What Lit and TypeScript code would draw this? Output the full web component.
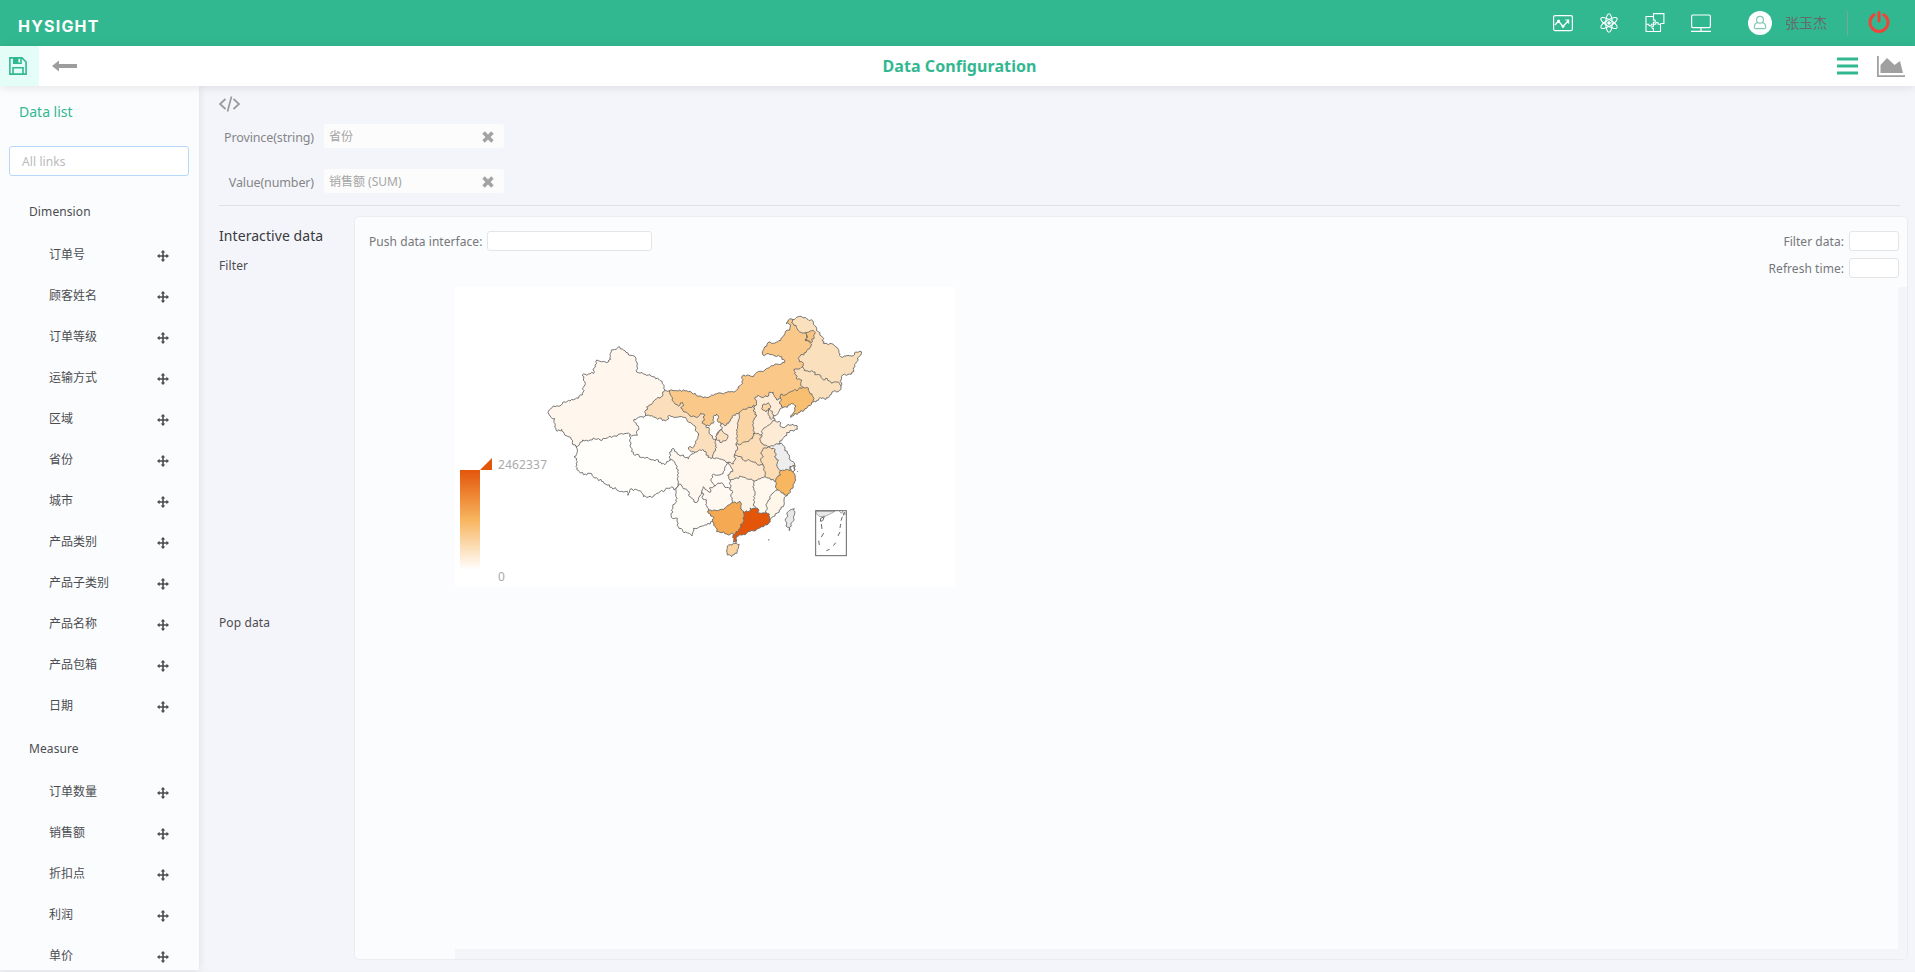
import { LitElement, html, css, svg } from "lit";
import { customElement, state } from "lit/decorators.js";

type Pt = [number, number];

/* Border lines of the map; each one is shared by the regions on both sides. */
const LINES: Record<string, string> = {
  xjOut: "375,270 372,262 367,250 357,238 330,224 310,222 290,216 292,192 288,175 272,166 258,157 250,150 240,142 236,140 228,148 214,150 210,165 212,178 205,186 190,184 170,180 165,195 161,220 145,222 126,226 136,250 130,262 127,285 110,294 90,303 72,305 60,318 40,318 28,330 27,343 34,353 44,356 42,368 48,385 52,394 65,388 74,405 92,412 97,428 108,440",
  xjTib: "108,440 118,435 128,420 150,420 160,414 180,420 205,412 225,408 240,402 260,400 270,403",
  xjQh: "270,403 275,408 292,406 290,395 297,388 290,375 282,358 316,347",
  xjGs: "316,347 318,330 328,315 338,308 350,296 364,290 375,270",
  tibOut: "108,440 112,455 102,470 112,485 108,500 118,515 140,525 150,520 160,530 190,545 215,562 245,574 262,574 264,586 270,568 295,572 305,578 310,590 335,592 350,580 375,570 385,565 395,560 402,570 411,562",
  tibQh: "270,403 270,425 275,445 280,462 310,472 330,478 355,480 365,492 375,494 380,485 390,480",
  tibSc: "390,480 400,482 408,495 413,515 412,535 414,552 411,562",
  qhSc: "390,480 390,462 395,448 403,448 412,462 420,468 430,465 445,477 455,462 465,457",
  qhGs: "316,347 330,348 345,352 372,360 380,360 388,345 405,352 425,350 440,358 452,368 465,378 470,395 476,405 470,420 468,430 462,440 445,443 450,452 465,457",
  gsTop: "375,270 388,272",
  gsNm: "388,272 395,290 403,308 415,318 428,308 432,316 422,324 432,336 455,350 475,350 482,340 492,342 492,355 487,370 498,377",
  nmOut: "388,272 410,272 440,272 460,282 480,288 500,293 525,282 545,280 570,276 590,270 608,250 605,235 612,225 640,230 655,215 675,210 690,200 710,192 733,188 735,182 720,170 690,164 668,164 672,145 684,128 700,130 722,122 735,100 750,84 752,75 738,70 745,60 757,58",
  hljNm: "757,58 755,68 768,76 775,92 795,98 800,112 795,122 810,128 813,138 800,152 775,176 778,185 790,190 788,200",
  hljOut: "757,58 770,52 785,50 800,56 818,62 828,80 835,95 848,112 850,130 880,133 895,148 900,162 902,170 918,168 935,168 948,156 964,155 957,170 950,185 945,200 935,222 908,225 903,240 903,258",
  hljJl: "788,200 793,212 820,216 830,224 842,226 850,240 862,236 875,250 890,246 903,258",
  jlOut: "903,258 903,265 895,275 885,272 870,285 858,298 840,292 828,306 820,306",
  jlNm: "788,200 780,206 762,208 768,225 772,238 785,240 782,255 790,262",
  jlLn: "790,262 800,262 808,275 816,282 820,306",
  lnNm: "790,262 775,268 750,276 735,285 722,283 722,295",
  lnHb: "722,295 720,312 730,322",
  lnOut: "820,306 800,325 775,338 762,346 752,352 765,330 768,318 760,312 750,314 742,322 730,322",
  hbNm: "722,295 710,300 703,290 700,277 688,276 686,288 665,292 655,285 645,292 650,305 645,318",
  hbCoast: "730,322 718,332 710,345 700,346 699,354 705,362",
  hbSd: "705,362 695,368 680,380 668,390 665,404",
  hbHn: "665,404 640,402",
  hbSx: "645,318 640,330 650,345 642,360 640,380 640,402",
  sxNm: "645,318 630,322 615,328 598,337",
  sxSn: "598,337 598,355 592,370 590,400 592,420 588,435",
  sxHn: "640,402 638,415 620,425 588,435",
  snNm: "598,337 580,345 572,362 560,375 543,372",
  nxNm: "498,377 512,374 522,365 520,350 530,342 535,348 532,362 543,372",
  nxGs: "498,377 508,388 512,405 520,418 528,418",
  nxSn: "543,372 545,388 535,395 530,405 528,418",
  gsSn: "528,418 525,430 530,442 522,455 518,473",
  gsSc: "465,457 475,452 488,448 498,455 504,472 518,473",
  snSc: "518,473 535,475 550,480 565,487",
  snHub: "565,487 580,492 585,480 583,466",
  snHn: "588,435 592,450 583,466",
  scCq: "565,487 555,500 550,515 540,525 520,522 512,540 525,558",
  scYn: "411,562 418,552 428,562 440,568 450,590 462,606 474,604 480,588 485,575",
  scGz: "485,575 490,560 500,570 512,576 508,564 525,558",
  ynGz: "485,575 492,582 486,592 500,600 497,615 505,625 503,635",
  ynGx: "503,635 512,648 522,652 518,665",
  ynOut: "411,562 408,580 410,605 398,620 394,652 412,655 415,680 432,698 448,700 456,708 460,685 480,680 500,675 518,665",
  gzGx: "503,635 520,630 545,628 560,620 578,608",
  gzHun: "578,608 573,590 578,575 570,565",
  gzCq: "525,558 540,550 550,553 555,562 570,565",
  cqHub: "565,487 575,505 578,515 563,525 570,540",
  cqHun: "570,540 570,565",
  hubHun: "570,540 585,535 605,530 625,538 643,543",
  hubJx: "643,543 660,537 675,530",
  hubAh: "670,497 675,515 675,530",
  hubHn: "583,466 600,470 610,480 630,482 650,492 670,497",
  hnAh: "670,497 662,482 670,470 662,460 668,450 684,440",
  hnSd: "665,404 660,420 670,435 684,440",
  sdJs: "684,440 700,438 715,432",
  sdOut: "705,362 718,364 720,378 735,382 745,372 772,378 772,388 750,392 735,408 725,422 715,432",
  jsOut: "715,432 725,430 735,445 742,460 750,480 764,494",
  jsAh: "684,440 700,445 708,460 703,470 715,480 710,495 722,512",
  jsZj: "722,512 738,508 750,512 750,500 764,494",
  zjOut: "764,494 765,508 758,516 766,530 764,545 760,560 748,580 742,586",
  ahZj: "722,512 722,525 708,535 706,545",
  ahJx: "675,530 690,535 706,545",
  zjJx: "706,545 708,555 712,570",
  zjFj: "712,570 722,575 732,584 742,586",
  jxFj: "712,570 695,582 685,600 680,620 678,638",
  fjOut: "742,586 732,600 732,615 718,630 705,648 690,660",
  fjGd: "678,638 688,642 690,660",
  jxGd: "678,638 665,640 652,637 655,627 645,626",
  jxHun: "643,543 638,560 645,580 640,600 645,626",
  hunGd: "645,626 630,624 628,634 610,634",
  hunGx: "578,608 590,610 600,604 603,622 610,634",
  gxGd: "610,634 612,660 602,680 595,695 580,703",
  gxOut: "518,665 525,680 530,695 545,698 560,702 580,703",
  gdOut: "690,660 685,672 665,680 650,688 620,700 595,708 588,715 588,728 580,726 578,712 580,703",
};

const REGIONS: [string, string][] = [
  ["#fff7ee", "xjOut xjTib xjQh xjGs"],
  ["#fffefa", "xjTib tibQh tibSc tibOut"],
  ["#fffffe", "xjQh qhGs qhSc tibQh"],
  ["#fbdfbd", "gsTop gsNm nxGs gsSn gsSc qhGs xjGs"],
  ["#fac98a", "nmOut hljNm jlNm lnNm hbNm sxNm snNm nxNm gsNm"],
  ["#fbe0bd", "hljOut hljJl hljNm"],
  ["#fbe0bd", "hljJl jlOut jlLn jlNm"],
  ["#f9bf70", "jlLn lnOut lnHb lnNm"],
  ["#feecd8", "hbNm lnHb hbCoast hbSd hbHn hbSx"],
  ["#fdebd5", "sdOut sdJs hnSd hbSd"],
  ["#fad4a2", "sxNm hbSx sxHn sxSn"],
  ["#feefdf", "snNm sxSn snHn snHub snSc gsSn nxSn"],
  ["#fffaf3", "nxNm nxSn nxGs"],
  ["#fbddb8", "sxHn hbHn hnSd hnAh hubHn snHn"],
  ["#ededed", "jsOut jsZj jsAh sdJs"],
  ["#fbdcb5", "jsAh ahZj ahJx hubAh hnAh"],
  ["#fde6cb", "hubHn hubAh hubJx hubHun cqHub snHub"],
  ["#f8b661", "jsZj zjOut zjFj zjJx ahZj"],
  ["#fff8ee", "hubJx ahJx zjJx jxFj jxGd jxHun"],
  ["#fff6ea", "zjFj fjOut fjGd jxFj"],
  ["#fef5e8", "hubHun jxHun hunGd hunGx gzHun cqHun"],
  ["#fff9f2", "gzCq gzHun gzGx ynGz scGz"],
  ["#fff8f0", "qhSc gsSc snSc scCq scGz scYn tibSc"],
  ["#fffaf5", "scCq cqHub cqHun gzCq"],
  ["#fffdf8", "scYn ynGz ynGx ynOut"],
  ["#f5a953", "gzGx hunGx gxGd gxOut ynGx"],
  ["#e3560a", "hunGd jxGd fjGd gdOut gxGd"],
];

/* Enclaves, municipalities and islands. */
const RINGS: [string, string][] = [
  ["#f9c480", "797,97 815,92 826,98 822,110 813,128 804,122 795,120 803,112"],
  ["#fad6a8", "665,325 672,312 685,308 692,318 688,330 678,336 668,330"],
  ["#fbe2c4", "687,324 692,332 700,345 698,354 689,355 684,342"],
  ["#fbdfbd", "538,394 545,388 553,400 563,405 558,422 545,428 528,418 531,405"],
  ["#ffffff", "750,500 763,498 764,510 755,514"],
  ["#fbd3a0", "560,750 566,735 590,730 598,734 592,755 575,770 562,765"],
  ["#e8e8e8", "763,626 764,640 758,665 748,692 746,682 738,678 736,662 745,635 755,628"],
];

/* Splits long edges into short, slightly uneven steps so that borders look natural. */
const roughen = (text: string): Pt[] => {
  const pts = text.split(" ").map((p) => p.split(",").map(Number) as Pt);
  let seed = pts.length * 37 + pts[0][0] * 7 + pts[0][1] * 13;
  const rnd = () => {
    seed = (seed * 9301 + 49297) % 233280;
    return seed / 233280 - 0.5;
  };
  const out: Pt[] = [pts[0]];
  for (let i = 1; i < pts.length; i++) {
    const [ax, ay] = pts[i - 1];
    const [bx, by] = pts[i];
    const len = Math.hypot(bx - ax, by - ay);
    const n = Math.max(1, Math.round(len / 5));
    for (let k = 1; k < n; k++) {
      const d = rnd() * 7;
      out.push([
        +(ax + ((bx - ax) * k) / n - ((by - ay) / len) * d).toFixed(1),
        +(ay + ((by - ay) * k) / n + ((bx - ax) / len) * d).toFixed(1),
      ]);
    }
    out.push(pts[i]);
  }
  return out;
};

const lines = new Map(Object.entries(LINES).map(([k, v]) => [k, roughen(v)]));
const gap = (a: Pt, b: Pt) => Math.hypot(a[0] - b[0], a[1] - b[1]);
const toPath = (pts: Pt[]) => "M" + pts.map((p) => p.join(" ")).join("L");

const regionPath = (names: string): string => {
  const parts = names.split(" ").map((n) => lines.get(n)!);
  let ring = [...parts[0]];
  const head = ring[0];
  const tail = ring[ring.length - 1];
  const nextEnds = [parts[1][0], parts[1][parts[1].length - 1]];
  if (Math.min(...nextEnds.map((e) => gap(e, head))) < Math.min(...nextEnds.map((e) => gap(e, tail)))) {
    ring.reverse();
  }
  for (const part of parts.slice(1)) {
    const end = ring[ring.length - 1];
    const forward = gap(part[0], end) <= gap(part[part.length - 1], end);
    ring = ring.concat(forward ? part : [...part].reverse());
  }
  return toPath(ring) + "Z";
};

@customElement("province-map")
class ProvinceMap extends LitElement {
  static styles = css`
    :host { display: block; width: 500px; height: 300px; background: #fff; }
    .chart { display: block; width: 500px; height: 300px; }
    .region { stroke: none; }
    .border { fill: none; stroke: #666; stroke-width: 2.7; stroke-linejoin: round; }
    .ring { stroke: #666; stroke-width: 2.6; stroke-linejoin: round; }
    .label { font: 12px "Noto Sans", sans-serif; fill: #aaa; }
  `;

  render() {
    return html`<svg class="chart" viewBox="0 0 500 300">
      <defs>
        <linearGradient id="scale" x1="0" y1="0" x2="0" y2="1">
          <stop offset="0" stop-color="#e3560a"></stop>
          <stop offset="0.5" stop-color="#f8b55f"></stop>
          <stop offset="1" stop-color="#fff"></stop>
        </linearGradient>
      </defs>
      <g transform="translate(85 13) scale(0.33333)">
        ${REGIONS.map(([fill, names]) => svg`<path class="region" fill=${fill} d=${regionPath(names)}></path>`)}
        ${[...lines.values()].map((l) => svg`<path class="border" d=${toPath(l)}></path>`)}
        ${RINGS.map(([fill, r]) => svg`<path class="ring" fill=${fill} d=${toPath(roughen(r)) + "Z"}></path>`)}
        <rect x="684" y="718" width="4" height="3" fill="#666"></rect>
        <rect x="771" y="513" width="3" height="3" fill="#888"></rect>
        <path d="M828 640 840 650 858 648 885 634 H828Z" fill="#e8e8e8" stroke="#888" stroke-width="2"></path>
        <path d="M898 633 904 640 908 634 912 646 918 640" fill="none" stroke="#777" stroke-width="2"></path>
        <rect x="827" y="632" width="92" height="135" fill="none" stroke="#666" stroke-width="3"></rect>
        <path d="M853 650 842 655 841 664 848 662Z M844 672 846 687 M851 699 844 711 M836 722 838 735 M859 752 869 748 M880 737 887 728 M894 708 900 696 M900 684 902 672 M903 662 907 650 M910 645 915 636" fill="none" stroke="#666" stroke-width="3"></path>
      </g>
      <rect x="5" y="183" width="20" height="100" fill="url(#scale)"></rect>
      <path d="M25 183 37 171V183Z" fill="#e3560a"></path>
      <text class="label" x="43" y="182" textLength="49">2462337</text>
      <text class="label" x="43" y="294">0</text>
    </svg>`;
  }
}

const moveIcon = html`<svg class="move" viewBox="0 0 12 12">
  <path d="M6 0 8.3 2.6H6.8V5.2H9.4V3.7L12 6 9.4 8.3V6.8H6.8V9.4H8.3L6 12 3.7 9.4H5.2V6.8H2.6V8.3L0 6 2.6 3.7V5.2H5.2V2.6H3.7Z" fill="#4a4a4f"></path>
</svg>`;

const crossIcon = html`<svg class="cross" viewBox="0 0 12 12">
  <path d="M2.8.3 6 3.4 9.2.3 11.7 2.8 8.6 6 11.7 9.2 9.2 11.7 6 8.6 2.8 11.7.3 9.2 3.4 6 .3 2.8Z" fill="#a3a3a3"></path>
</svg>`;

@customElement("app-root")
class AppRoot extends LitElement {
  static styles = css`
    :host {
      display: flex; flex-direction: column; height: 972px; overflow: hidden;
      background: #f2f3f7; color: #4c4c50;
      font: 12px/20px "Noto Sans", "Noto Sans CJK SC", sans-serif;
    }
    * { box-sizing: border-box; }
    svg { display: block; flex: none; }
    .header { display: flex; align-items: center; height: 46px; background: #32b890; flex: none; padding: 0 25px 0 18px; }
    .logo { font: 700 16px/20px Inter, "Noto Sans", sans-serif; letter-spacing: 1.2px; color: #fff; flex: 1; padding-top: 6px; }
    .apps { display: flex; gap: 26px; margin-right: 37px; }
    .user { font-size: 14px; color: #666a69; margin-left: 13px; }
    .rule { width: 1px; height: 25px; background: #74a898; margin: 0 20px; }
    .toolbar { display: flex; align-items: center; height: 40px; background: #fff; flex: none; position: relative; z-index: 2; box-shadow: 0 1px 10px rgba(0,0,0,.1); }
    .save { display: flex; width: 39px; height: 40px; align-items: center; padding-left: 9px; background: #e5fdf7; }
    .back { width: 84px; padding-left: 13px; }
    .title { flex: 1; text-align: center; font: 700 16px/20px "Noto Sans", sans-serif; letter-spacing: 0.08px; color: #32b890; padding-left: 2px; }
    .views { display: flex; gap: 19px; width: 120px; justify-content: flex-end; padding: 0 9px 0 0; align-items: center; margin-right: 1px; }
    .body { display: flex; height: 884px; flex: none; }
    .side { width: 199px; background: #fafcfe; flex: none; overflow: hidden; padding: 16px 9px 0; position: relative; z-index: 1; box-shadow: 0 0 8px rgba(0,0,0,.1); }
    .side-title { font-size: 14px; color: #32b890; padding-left: 10px; height: 44px; }
    .search { display: flex; width: 180px; height: 30px; border: 1px solid #b5d8fc; border-radius: 3px; background: #fff; font: 12px "Noto Sans", sans-serif; letter-spacing: 0.1px; padding: 0 12px; color: #555; outline: none; }
    .search::placeholder { color: #bbb; }
    .group { box-sizing: content-box; height: 33px; padding: 26px 20px 0; letter-spacing: 0.1px; }
    .fields + .group { padding-top: 12px; }
    .field { display: flex; justify-content: space-between; height: 41px; align-items: center; padding: 0 21px 0 40px; }
    .field span { padding-bottom: 2px; }
    .move { width: 12px; height: 12px; }
    .main { flex: 1; background: #f4f5fa; padding: 9px 7px 0 20px; }
    .code { display: block; margin-bottom: 11px; }
    .mapping { display: flex; align-items: center; height: 24px; margin-bottom: 21px; }
    .mapping-label { width: 95px; text-align: right; color: #858588; font-size: 12.5px; letter-spacing: -0.12px; padding-top: 3px; }
    .slot { display: flex; align-items: center; justify-content: space-between; width: 180px; height: 24px; margin-left: 10px; padding: 1px 10px 0 5px; background: #fcfcfc; border-radius: 3px; color: #a5a5a5; }
    .cross { width: 12px; height: 12px; }
    .line { height: 1px; background: #dde0e5; margin: -9px 8px 10px 0; }
    .work { display: flex; }
    .names { width: 135px; padding-top: 10px; color: #4c4c50; }
    .names .big { font-size: 14px; letter-spacing: 0.07px; color: #3a3a3e; margin-bottom: 10px; }
    .names .filter { height: 357px; }
    .names div { letter-spacing: 0.1px; }
    .panel { flex: 1; height: 744px; border: 1px solid #ececee; border-radius: 5px; background: #fafcfe; display: flex; flex-direction: column; overflow: hidden; }
    .options { display: flex; justify-content: space-between; height: 70px; padding: 14px 8px 0 14px; color: #77777b; }
    .option { display: flex; justify-content: flex-end; gap: 5px; height: 20px; margin-bottom: 7px; }
    .option span { padding-top: 1px; letter-spacing: 0.05px; }
    .box { height: 20px; border: 1px solid #e5e5e6; border-radius: 3px; background: #fff; }
    .wide { width: 165px; }
    .small { width: 50px; }
    .preview { flex: 1; margin-left: 100px; border-right: 9px solid #f4f5f9; border-bottom: 10px solid #f4f5f9; }
  `;

  @state() private dimensions = ["订单号", "顾客姓名", "订单等级", "运输方式", "区域", "省份", "城市", "产品类别", "产品子类别", "产品名称", "产品包箱", "日期"];
  @state() private measures = ["订单数量", "销售额", "折扣点", "利润", "单价"];

  private fields(names: string[]) {
    return html`<div class="fields">
      ${names.map((n) => html`<div class="field"><span>${n}</span>${moveIcon}</div>`)}
    </div>`;
  }

  private mapping(label: string, value: string) {
    return html`<div class="mapping">
      <span class="mapping-label">${label}</span>
      <div class="slot"><span>${value}</span>${crossIcon}</div>
    </div>`;
  }

  render() {
    return html`
      <div class="header">
        <div class="logo">HYSIGHT</div>
        <div class="apps">
          <svg width="20" height="20" viewBox="0 0 20 20" fill="none" stroke="#fff" stroke-width="1.2">
            <rect x="0.6" y="2.6" width="18.8" height="15" rx="1.5"></rect>
            <path d="M2 12 5.5 8 10 13.5 15.5 7.5M15.6 10.5V7H12.3"></path>
            <circle cx="5.5" cy="8" r="0.9" fill="#fff"></circle><circle cx="10" cy="13.3" r="0.9" fill="#fff"></circle>
          </svg>
          <svg width="20" height="20" viewBox="0 0 20 20" fill="none" stroke="#fff" stroke-width="1.1">
            <ellipse cx="10" cy="10" rx="3.2" ry="9.3"></ellipse>
            <ellipse cx="10" cy="10" rx="3.2" ry="9.3" transform="rotate(60 10 10)"></ellipse>
            <ellipse cx="10" cy="10" rx="3.2" ry="9.3" transform="rotate(120 10 10)"></ellipse>
            <circle cx="10" cy="10" r="1.2" fill="#fff"></circle>
          </svg>
          <svg width="20" height="20" viewBox="0 0 20 20" fill="none" stroke="#fff" stroke-width="1.1">
            <path d="M8.5 4.5V.6H18.9V10.5H15.5M1 3.5H8.5V7C10.5 6 11.5 9.5 8.5 9.3V11.2H6.5C6.5 13.4 3.5 13.4 3.7 11.2H1ZM1 11.2V18.5H15.5V11.2H13.3C13.6 8.8 10.4 8.8 10.7 11.2H8.5V13.3C6.3 12.6 6.3 16 8.5 15.6V18.5"></path>
          </svg>
          <svg width="20" height="20" viewBox="0 0 20 20" fill="none" stroke="#fff" stroke-width="1.2">
            <rect x="0.6" y="2" width="18.8" height="12.6" rx="1.3"></rect>
            <path d="M0 18.3H20M10 15V18"></path>
          </svg>
        </div>
        <svg width="24" height="24" viewBox="0 0 24 24">
          <circle cx="12" cy="12" r="12" fill="#fff"></circle>
          <g fill="none" stroke="#7fc9b4" stroke-width="1.2">
            <circle cx="12" cy="8.7" r="3.4"></circle>
            <path d="M9.6 11.6C6.8 12.4 6.2 14.5 6.3 16.4Q6.4 17.6 7.6 17.6H16.4Q17.6 17.6 17.7 16.4C17.8 14.5 17.2 12.4 14.4 11.6"></path>
          </g>
        </svg>
        <span class="user">张玉杰</span>
        <span class="rule"></span>
        <svg width="22" height="24" viewBox="0 0 22 24" fill="none" stroke="#f04438" stroke-width="3" stroke-linecap="round">
          <path d="M6.2 3.8A9 9 0 1 0 15.8 3.8M11 1.5V10"></path>
        </svg>
      </div>

      <div class="toolbar">
        <div class="save">
          <svg width="18" height="18" viewBox="0 0 18 18" fill="none" stroke="#32b890" stroke-width="1.6">
            <path d="M.9.9H13L17.1 5V17.1H.9ZM4 17V10.8H14V17"></path>
            <path d="M4.8 1V6.2H12V1"></path>
            <path d="M4.8 1H8.6V6H4.8Z" fill="#32b890"></path>
          </svg>
        </div>
        <div class="back">
          <svg width="25" height="12" viewBox="0 0 25 12"><path d="M0 6 7 0.5V4H25V8H7V11.5Z" fill="#9d9d9d"></path></svg>
        </div>
        <div class="title">Data Configuration</div>
        <div class="views">
          <svg width="21" height="18" viewBox="0 0 21 18"><path d="M0 .5H21V3.5H0ZM0 7.5H21V10.5H0ZM0 14.5H21V17.5H0Z" fill="#32b890"></path></svg>
          <svg width="28" height="21" viewBox="0 0 28 21"><path d="M0 0H1.8V19.2H28V21H0ZM3.5 17V9L10 2 17.5 9 23 5 26 17Z" fill="#a0a0a0"></path></svg>
        </div>
      </div>

      <div class="body">
        <div class="side">
          <div class="side-title">Data list</div>
          <input class="search" placeholder="All links">
          <div class="group">Dimension</div>
          ${this.fields(this.dimensions)}
          <div class="group">Measure</div>
          ${this.fields(this.measures)}
        </div>
        <div class="main">
          <svg class="code" width="21" height="18" viewBox="0 0 21 18" fill="none" stroke="#999" stroke-width="1.7">
            <path d="M6.5 4 1 9 6.5 14M14.5 4 20 9 14.5 14M12.5 1.5 8.5 16.5"></path>
          </svg>
          ${this.mapping("Province(string)", "省份")}
          ${this.mapping("Value(number)", "销售额 (SUM)")}
          <div class="line"></div>
          <div class="work">
            <div class="names">
              <div class="big">Interactive data</div>
              <div class="filter">Filter</div>
              <div>Pop data</div>
            </div>
            <div class="panel">
              <div class="options">
                <div class="option"><span>Push data interface:</span><div class="box wide"></div></div>
                <div>
                  <div class="option"><span>Filter data:</span><div class="box small"></div></div>
                  <div class="option"><span>Refresh time:</span><div class="box small"></div></div>
                </div>
              </div>
              <div class="preview"><province-map></province-map></div>
            </div>
          </div>
        </div>
      </div>
    `;
  }
}
